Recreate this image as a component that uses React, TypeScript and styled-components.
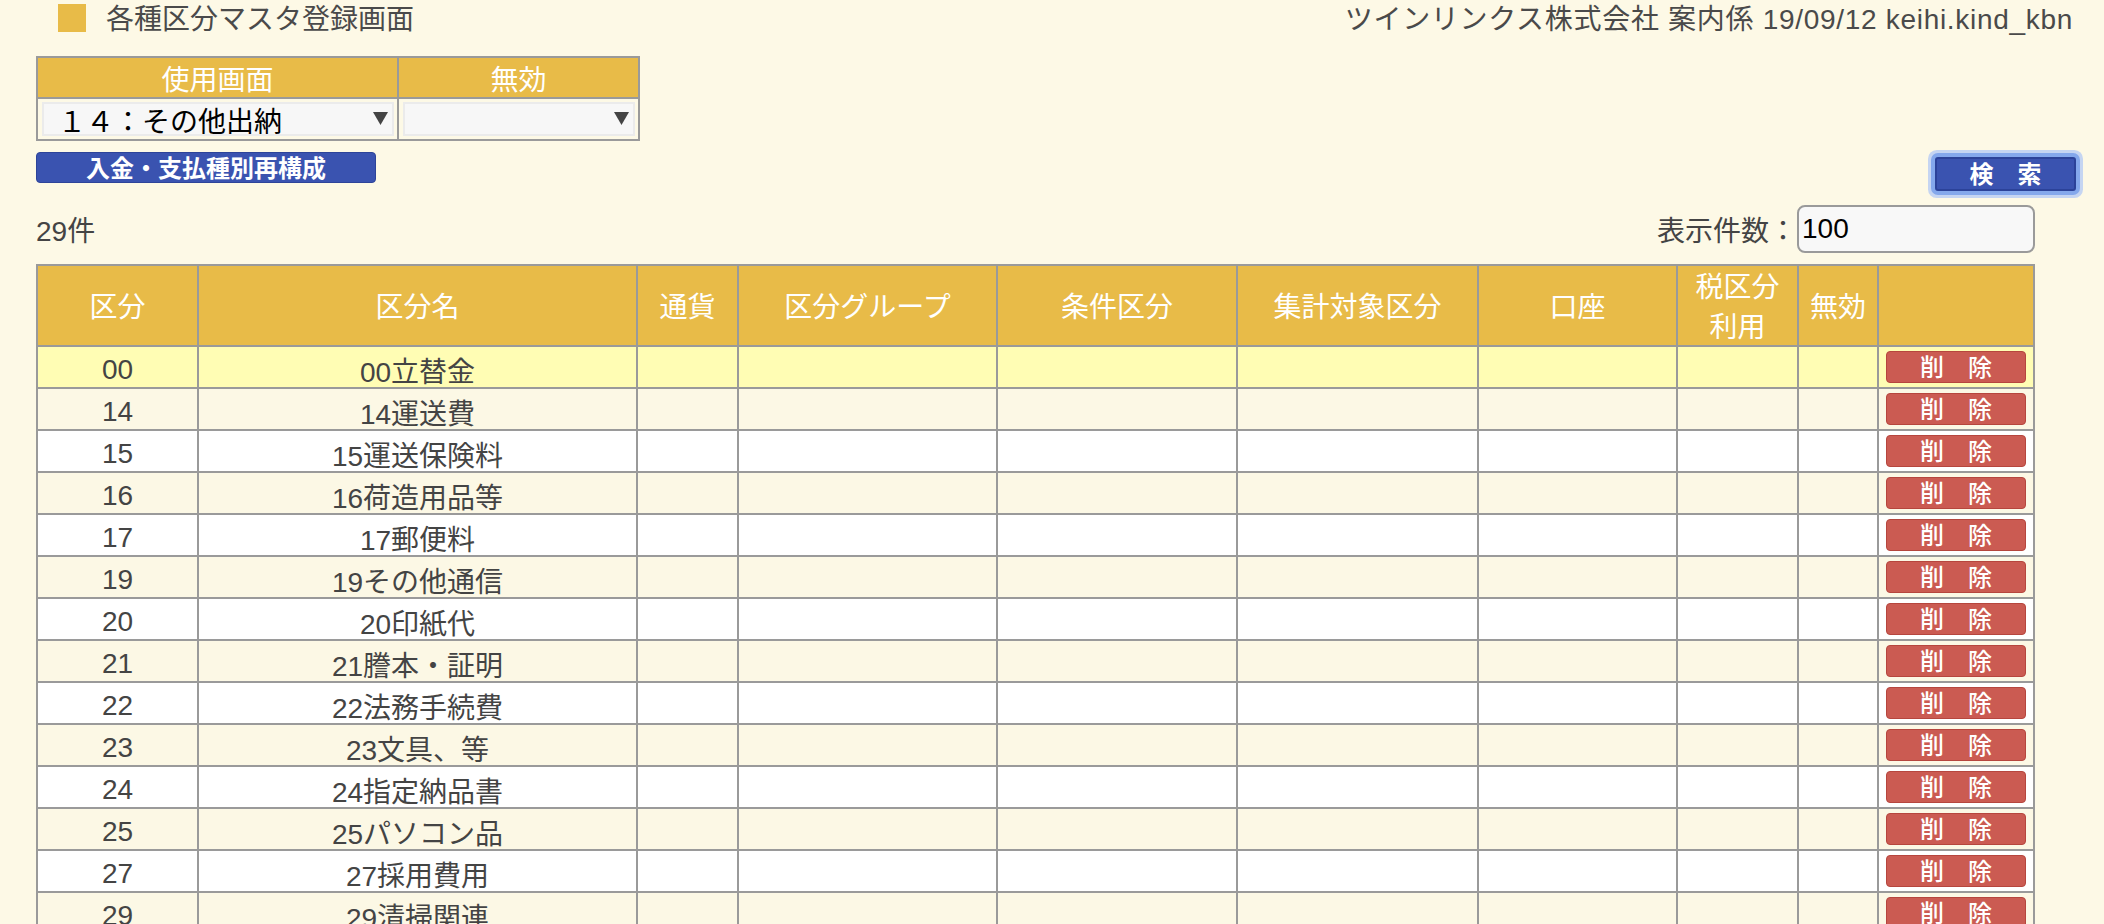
import React from "react";
import styled, { createGlobalStyle } from "styled-components";

const FONT = `"Liberation Sans", "Noto Sans CJK JP", sans-serif`;
const LINE = "#9a9a9a";
const GOLD = "#e8bb48";
const CREAM = "#fdf9e6";

const GlobalStyle = createGlobalStyle`
  html, body { margin: 0; padding: 0; background: ${CREAM}; }
  body { font-family: ${FONT}; color: #444; }
  * { box-sizing: border-box; }
`;

const Page = styled.div`
  padding: 4px 28px 0 36px;
`;

const TopBar = styled.header`
  display: flex;
  align-items: center;
  justify-content: space-between;
  height: 28px;
  padding: 0 3px 0 22px;
`;

const TitleGroup = styled.div`
  display: flex;
  align-items: center;
  gap: 20px;
`;

const TitleMark = styled.span`
  display: block;
  width: 28px;
  height: 28px;
  background: ${GOLD};
`;

const Title = styled.h1`
  margin: 0;
  padding-top: 3px;
  font-size: 28px;
  font-weight: normal;
  line-height: 28px;
  color: #4a4a4a;
`;

const UserInfo = styled.div`
  padding-top: 3px;
  font-size: 28px;
  line-height: 28px;
  letter-spacing: 0.7px;
  color: #4a4a4a;
  white-space: nowrap;
`;

const FilterGrid = styled.div`
  margin-top: 24px;
  width: 604px;
  display: grid;
  grid-template-columns: 361px 241px;
  border-top: 2px solid ${LINE};
  border-left: 2px solid ${LINE};
`;

const FilterHead = styled.div`
  height: 41px;
  padding-top: 3px;
  background: ${GOLD};
  color: #fff;
  font-size: 28px;
  line-height: 39px;
  text-align: center;
  border-right: 2px solid ${LINE};
  border-bottom: 2px solid ${LINE};
`;

const FilterCell = styled.div`
  height: 42px;
  padding: 3px 3px 3px 4px;
  border-right: 2px solid ${LINE};
  border-bottom: 2px solid ${LINE};
`;

const SelectWrap = styled.div`
  position: relative;
  height: 34px;
`;

const Select = styled.select`
  appearance: none;
  -webkit-appearance: none;
  display: block;
  width: 100%;
  height: 34px;
  margin: 0;
  border: 2px solid #ebebeb;
  border-radius: 0;
  background: #f7f7f7;
  font-family: ${FONT};
  font-size: 28px;
  color: #000;
  padding: 3px 30px 0 14px;
  outline: none;
`;

const Arrow = styled.svg`
  position: absolute;
  right: 6px;
  top: 10px;
  width: 15px;
  height: 13px;
  pointer-events: none;
`;

const ActionRow = styled.div`
  display: flex;
  justify-content: space-between;
  align-items: flex-start;
  margin-top: 11px;
`;

const BlueButton = styled.button`
  margin: 0;
  padding: 2px 0 0;
  background: #3a53b0;
  color: #fff;
  font-family: ${FONT};
  font-size: 24px;
  font-weight: 700;
  line-height: 1;
  cursor: pointer;
`;

const RebuildButton = styled(BlueButton)`
  width: 340px;
  height: 31px;
  border: 1px solid #2d4499;
  border-radius: 4px;
`;

const SearchButton = styled(BlueButton)`
  margin-top: 5px;
  width: 141px;
  height: 34px;
  border: 2px solid #2b4299;
  border-radius: 3px;
  box-shadow: 0 0 0 4px #84a8ec, 0 0 0 7px #c5d5f2;
`;

const CountRow = styled.div`
  width: 1999px;
  height: 48px;
  margin-top: 14px;
  display: flex;
  align-items: center;
  justify-content: space-between;
`;

const Count = styled.span`
  font-size: 28px;
  color: #444;
`;

const PerPage = styled.label`
  display: flex;
  align-items: center;
  font-size: 28px;
  color: #444;
`;

const PerPageInput = styled.input`
  width: 238px;
  height: 48px;
  margin: 0;
  border: 2px solid ${LINE};
  border-radius: 8px;
  background: #f8f8f8;
  font-family: ${FONT};
  font-size: 28px;
  color: #000;
  padding: 0 3px;
  outline: none;
`;

const COLS = "161px 439px 101px 259px 240px 241px 199px 121px 80px 156px";

const Table = styled.div`
  width: 1999px;
  margin-top: 11px;
  border-top: 2px solid ${LINE};
  border-left: 2px solid ${LINE};
`;

const Row = styled.div<{ $bg: string }>`
  display: grid;
  grid-template-columns: ${COLS};
  background: ${(p) => p.$bg};
`;

const HeadCell = styled.div`
  height: 81px;
  padding-top: 5px;
  display: flex;
  align-items: center;
  justify-content: center;
  text-align: center;
  background: ${GOLD};
  color: #fff;
  font-size: 28px;
  line-height: 40px;
  border-right: 2px solid ${LINE};
  border-bottom: 2px solid ${LINE};
`;

const Cell = styled.div<{ $text?: boolean }>`
  height: 42px;
  padding-top: ${(p) => (p.$text ? "5px" : "0")};
  display: flex;
  align-items: center;
  justify-content: center;
  font-size: 28px;
  color: #444;
  white-space: nowrap;
  border-right: 2px solid ${LINE};
  border-bottom: 2px solid ${LINE};
`;

const DeleteButton = styled.button`
  width: 140px;
  height: 32px;
  margin: 0;
  padding: 2px 0 0;
  background: #cb5b52;
  border: 1px solid #b6463e;
  border-radius: 4px;
  color: #fff;
  font-family: ${FONT};
  font-size: 24px;
  font-weight: 500;
  line-height: 1;
  cursor: pointer;
`;

const HEADERS: React.ReactNode[] = [
  "区分",
  "区分名",
  "通貨",
  "区分グループ",
  "条件区分",
  "集計対象区分",
  "口座",
  <>
    税区分
    <br />
    利用
  </>,
  "無効",
  "",
];

const ROWS: [string, string][] = [
  ["00", "00立替金"],
  ["14", "14運送費"],
  ["15", "15運送保険料"],
  ["16", "16荷造用品等"],
  ["17", "17郵便料"],
  ["19", "19その他通信"],
  ["20", "20印紙代"],
  ["21", "21謄本・証明"],
  ["22", "22法務手続費"],
  ["23", "23文具、等"],
  ["24", "24指定納品書"],
  ["25", "25パソコン品"],
  ["27", "27採用費用"],
  ["29", "29清掃関連"],
];

const rowBg = (i: number) => (i === 0 ? "#fffdb4" : i % 2 === 1 ? "#fcf8e5" : "#ffffff");

const DropArrow = () => (
  <Arrow viewBox="0 0 15 13">
    <polygon points="0,0 15,0 7.5,13" fill="#444" />
  </Arrow>
);

export default function App() {
  return (
    <>
      <GlobalStyle />
      <Page>
        <TopBar>
          <TitleGroup>
            <TitleMark />
            <Title>各種区分マスタ登録画面</Title>
          </TitleGroup>
          <UserInfo>ツインリンクス株式会社 案内係 19/09/12 keihi.kind_kbn</UserInfo>
        </TopBar>

        <FilterGrid>
          <FilterHead>使用画面</FilterHead>
          <FilterHead>無効</FilterHead>
          <FilterCell>
            <SelectWrap>
              <Select defaultValue="14">
                <option value="14">１４：その他出納</option>
              </Select>
              <DropArrow />
            </SelectWrap>
          </FilterCell>
          <FilterCell>
            <SelectWrap>
              <Select defaultValue="">
                <option value=""></option>
              </Select>
              <DropArrow />
            </SelectWrap>
          </FilterCell>
        </FilterGrid>

        <ActionRow>
          <RebuildButton>入金・支払種別再構成</RebuildButton>
          <SearchButton>検　索</SearchButton>
        </ActionRow>

        <CountRow>
          <Count>29件</Count>
          <PerPage>
            表示件数：
            <PerPageInput defaultValue="100" />
          </PerPage>
        </CountRow>

        <Table>
          <Row $bg={GOLD}>
            {HEADERS.map((h, i) => (
              <HeadCell key={i}>{h}</HeadCell>
            ))}
          </Row>
          {ROWS.map(([code, name], i) => (
            <Row key={code} $bg={rowBg(i)}>
              <Cell $text>{code}</Cell>
              <Cell $text>{name}</Cell>
              <Cell />
              <Cell />
              <Cell />
              <Cell />
              <Cell />
              <Cell />
              <Cell />
              <Cell>
                <DeleteButton>削　除</DeleteButton>
              </Cell>
            </Row>
          ))}
        </Table>
      </Page>
    </>
  );
}
